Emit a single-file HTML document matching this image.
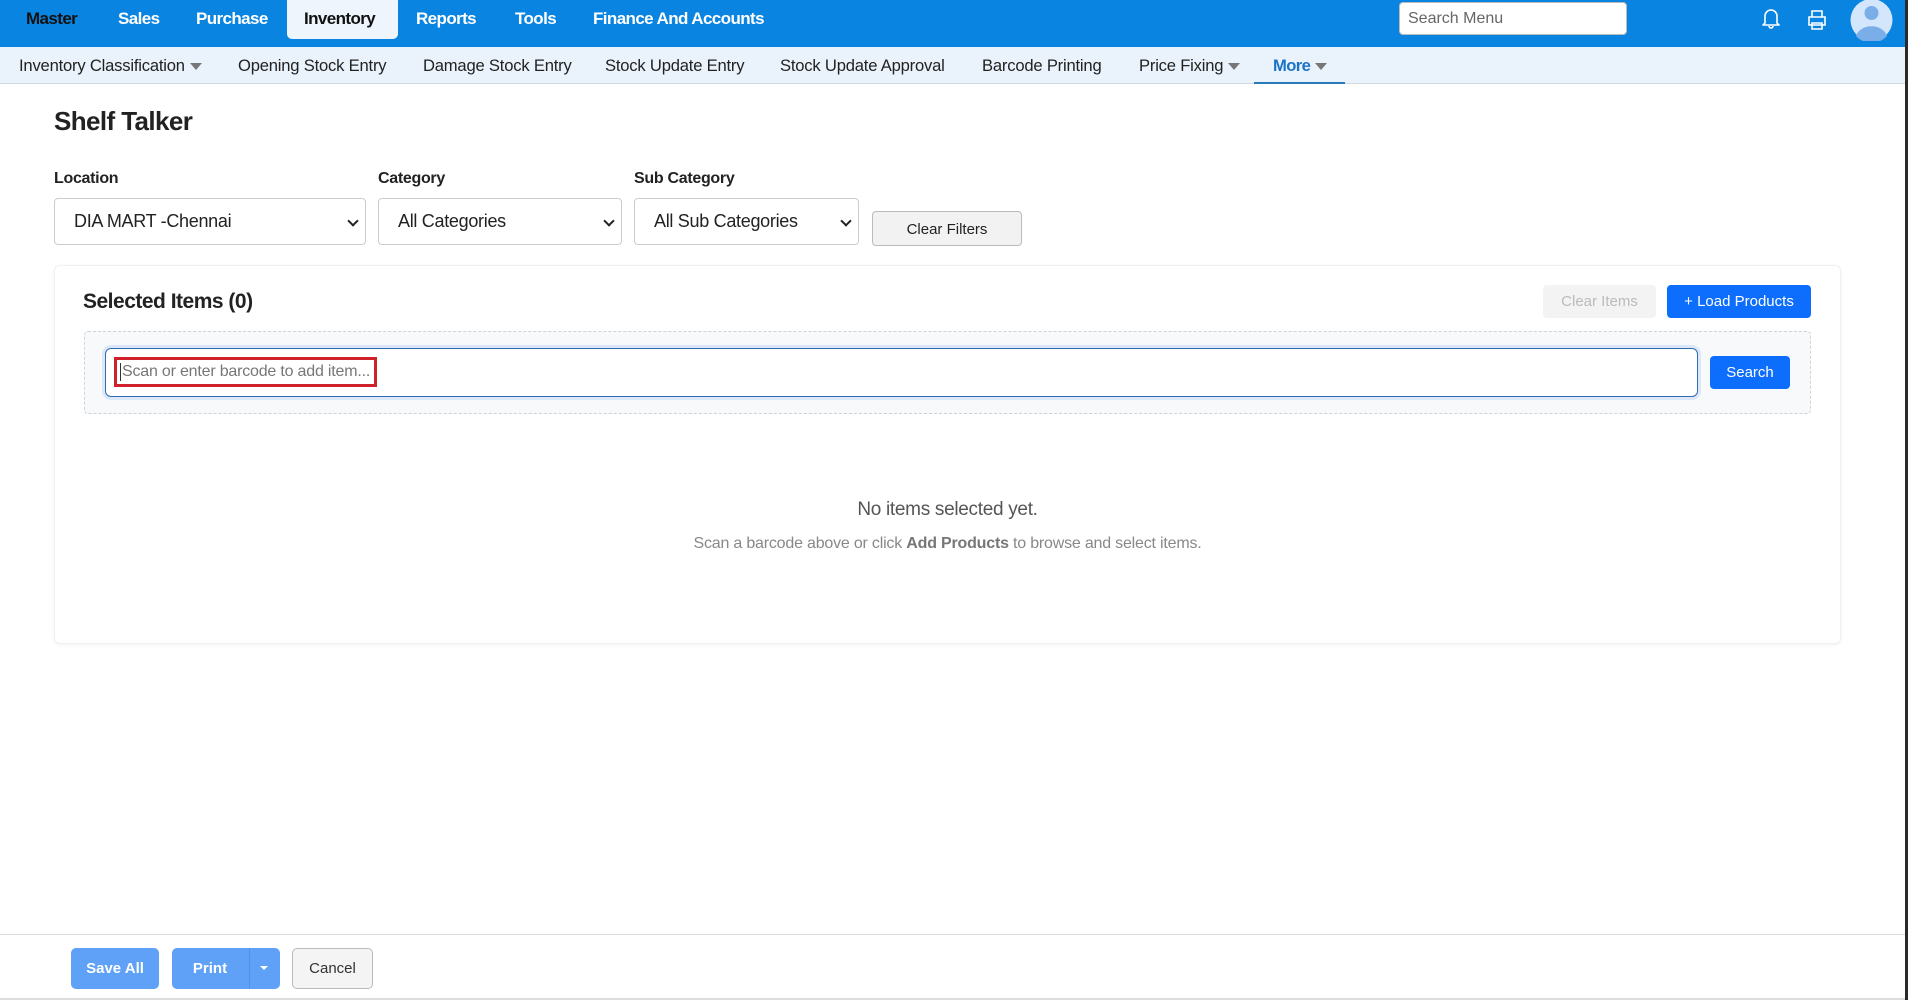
<!DOCTYPE html>
<html><head><meta charset="utf-8">
<style>
*{box-sizing:border-box;margin:0;padding:0}
body{width:1908px;height:1000px;position:relative;overflow:hidden;background:#fff;font-family:"Liberation Sans",sans-serif;color:#222}
.a{position:absolute;white-space:nowrap}
.top{left:0;top:0;width:1908px;height:47px;background:#0a84e1}
.nav{top:5px;font-size:17px;font-weight:bold;color:#fff;letter-spacing:-0.6px;line-height:28px}
.tab{left:287px;top:0;width:111px;height:39px;background:#eef5fc;border-radius:0 0 5px 5px}
.sub{left:0;top:47px;width:1905px;height:37px;background:#eaf3fb;border-bottom:1px solid #d0d8e0}
.si{top:56px;font-size:16.6px;color:#222;line-height:20px;letter-spacing:-0.2px}
.tri{display:inline-block;width:0;height:0;border-left:6px solid transparent;border-right:6px solid transparent;border-top:7px solid #777;vertical-align:middle;margin-left:5px}
.lbl{top:170px;font-size:16px;font-weight:bold;color:#222;letter-spacing:-0.3px}
.sel{top:198px;height:47px;border:1px solid #ccc;border-radius:4px;background:#fff;font-size:18px;padding-left:19px;line-height:45px;color:#222;letter-spacing:-0.3px}
.chev{position:absolute;right:8px;top:18px;width:8px;height:8px;border-right:2px solid #222;border-bottom:2px solid #222;transform:rotate(45deg)}
.btn{border-radius:4px;text-align:center;font-size:15px}
</style></head><body>
<div class="a top"></div>
<div class="a tab"></div>
<div class="a nav" style="left:26px;color:#111">Master</div>
<div class="a nav" style="left:118px">Sales</div>
<div class="a nav" style="left:196px">Purchase</div>
<div class="a nav" style="left:304px;color:#111">Inventory</div>
<div class="a nav" style="left:416px">Reports</div>
<div class="a nav" style="left:515px">Tools</div>
<div class="a nav" style="left:593px">Finance And Accounts</div>
<div class="a" style="left:1399px;top:2px;width:228px;height:33px;background:#fff;border-radius:4px;border:1px solid #bbb;font-size:16px;color:#666;padding-left:8px;line-height:31px">Search Menu</div>
<svg class="a" style="left:1760px;top:6px" width="22" height="24" viewBox="0 0 22 24"><path d="M5 17V10a6 6 0 0 1 12 0v7l2 2H3z M9 20a2 2 0 0 0 4 0" fill="none" stroke="#fff" stroke-width="1.6" stroke-linejoin="round"/></svg>
<svg class="a" style="left:1806px;top:9px" width="22" height="22" viewBox="0 0 22 22"><path d="M6 8V2h10v6 M3 8h16v8H3z M6 14h10v6H6z" fill="none" stroke="#fff" stroke-width="1.6"/></svg>
<svg class="a" style="left:1850px;top:0" width="43" height="41" viewBox="0 0 43 41"><circle cx="21.5" cy="20" r="21" fill="#d4e6fb"/><circle cx="21.5" cy="13" r="7" fill="#7aaee8"/><path d="M6 36a16 13 0 0 1 31 0 21 21 0 0 1-31 0z" fill="#7aaee8"/></svg>
<div class="a" style="left:1905px;top:0;width:3px;height:1000px;background:#2a2a2a"></div>

<div class="a sub"></div>
<div class="a si" style="left:19px">Inventory Classification<span class="tri"></span></div>
<div class="a si" style="left:238px">Opening Stock Entry</div>
<div class="a si" style="left:423px">Damage Stock Entry</div>
<div class="a si" style="left:605px">Stock Update Entry</div>
<div class="a si" style="left:780px">Stock Update Approval</div>
<div class="a si" style="left:982px">Barcode Printing</div>
<div class="a si" style="left:1139px">Price Fixing<span class="tri"></span></div>
<div class="a si" style="left:1273px;color:#1a73c8;font-weight:bold;letter-spacing:-0.6px">More<span class="tri"></span></div>
<div class="a" style="left:1254px;top:82px;width:91px;height:2px;background:#2a7ab8"></div>

<div class="a" style="left:54px;top:106px;font-size:26px;font-weight:bold;color:#222;letter-spacing:-0.6px">Shelf Talker</div>
<div class="a lbl" style="left:54px">Location</div>
<div class="a lbl" style="left:378px">Category</div>
<div class="a lbl" style="left:634px">Sub Category</div>
<div class="a sel" style="left:54px;width:312px">DIA MART -Chennai<span class="chev"></span></div>
<div class="a sel" style="left:378px;width:244px">All Categories<span class="chev"></span></div>
<div class="a sel" style="left:634px;width:225px">All Sub Categories<span class="chev"></span></div>
<div class="a btn" style="left:872px;top:211px;width:150px;height:35px;background:#f2f2f2;border:1px solid #bbb;line-height:35px;color:#222">Clear Filters</div>

<div class="a" style="left:54px;top:265px;width:1787px;height:379px;border:1px solid #eef0f2;border-radius:6px;box-shadow:0 1px 3px rgba(0,0,0,0.06)"></div>
<div class="a" style="left:83px;top:290px;font-size:21px;font-weight:bold;color:#222;letter-spacing:-0.5px">Selected Items (0)</div>
<div class="a btn" style="left:1543px;top:285px;width:113px;height:33px;background:#f3f3f3;line-height:34px;color:#bbb">Clear Items</div>
<div class="a btn" style="left:1667px;top:285px;width:144px;height:33px;background:#0d6efd;line-height:34px;color:#fff">+ Load Products</div>
<div class="a" style="left:84px;top:331px;width:1727px;height:83px;background:#f8f9fb;border:1px dashed #cfd3d8;border-radius:4px"></div>
<div class="a" style="left:105px;top:348px;width:1593px;height:49px;background:#fff;border:1.5px solid #2f6db0;border-radius:6px;box-shadow:0 0 0 3px #dce8fa"></div>
<div class="a" style="left:114px;top:357px;width:263px;height:30px;border:3px solid #d0202a"></div>
<div class="a" style="left:120px;top:363px;font-size:16px;color:#777;letter-spacing:-0.2px;border-left:1px solid #333;padding-left:1px">Scan or enter barcode to add item...</div>
<div class="a btn" style="left:1710px;top:356px;width:80px;height:33px;background:#0d6efd;line-height:34px;color:#fff">Search</div>

<div class="a" style="left:54px;top:499px;width:1787px;text-align:center;font-size:19px;color:#555;letter-spacing:-0.3px">No items selected yet.</div>
<div class="a" style="left:54px;top:535px;width:1787px;text-align:center;font-size:16px;color:#888;letter-spacing:-0.2px">Scan a barcode above or click <b style="color:#777">Add Products</b> to browse and select items.</div>

<div class="a" style="left:0;top:934px;width:1905px;height:1px;background:#ddd;box-shadow:0 -1px 3px rgba(0,0,0,0.06)"></div>
<div class="a btn" style="left:71px;top:948px;width:88px;height:41px;background:#5fa1f6;color:#fff;font-weight:bold;line-height:41px;border-radius:5px">Save All</div>
<div class="a btn" style="left:172px;top:948px;width:108px;height:41px;background:#5fa1f6;color:#fff;font-weight:bold;line-height:41px;border-radius:5px">
<span style="position:absolute;left:0;width:76px;text-align:center">Print</span>
<span style="position:absolute;left:77px;top:0;width:1px;height:41px;background:#4f92e8"></span>
<span style="position:absolute;left:88px;top:18px;border-left:4px solid transparent;border-right:4px solid transparent;border-top:4px solid #fff"></span></div>
<div class="a btn" style="left:292px;top:948px;width:81px;height:41px;background:#f4f4f4;border:1px solid #bbb;line-height:39px;color:#333;border-radius:5px">Cancel</div>
<div class="a" style="left:0;top:998px;width:1905px;height:2px;background:#ddd"></div>
</body></html>
